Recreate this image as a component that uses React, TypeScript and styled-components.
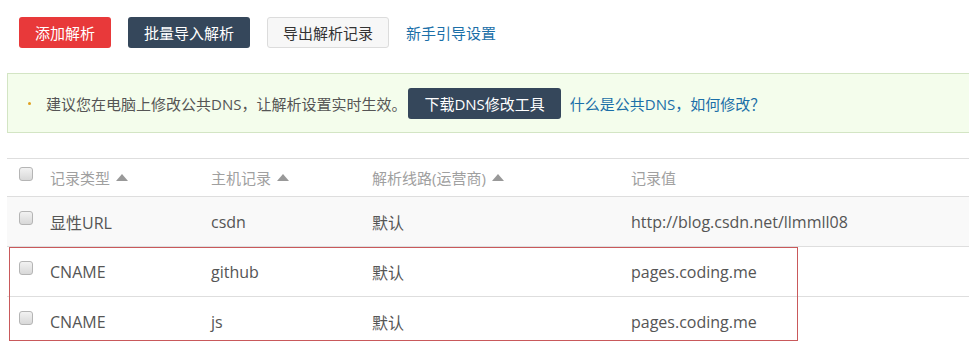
import React from 'react';
import styled, { createGlobalStyle } from 'styled-components';

const GlobalStyle = createGlobalStyle`
  body {
    margin: 0;
    background: #fff;
    font-family: 'Open Sans', 'Noto Sans CJK SC', sans-serif;
    font-size: 15px;
    color: #555;
    overflow: hidden;
  }
`;

const Page = styled.div`
  width: 969px;
  height: 348px;
  overflow: hidden;
`;

const Toolbar = styled.div`
  display: flex;
  align-items: center;
  gap: 17px;
  padding: 16px 0 0 19px;
  height: 32px;
`;

const Button = styled.button<{ $kind: 'danger' | 'dark' | 'plain' }>`
  height: 31px;
  padding: 0 15px;
  border-radius: 3px;
  font-family: inherit;
  font-size: 15px;
  cursor: pointer;
  border: 1px solid transparent;
  ${({ $kind }) =>
    $kind === 'danger'
      ? 'background: #e8393a; color: #fff;'
      : $kind === 'dark'
        ? 'background: #35475b; color: #fff;'
        : 'background: #f7f7f7; color: #333; border-color: #dcdcdc;'}
`;

const Link = styled.a`
  color: #1b6fa8;
  text-decoration: none;
  font-size: 15px;
`;

const Notice = styled.div`
  display: flex;
  align-items: center;
  margin: 25px -10px 0 7px;
  height: 58px;
  padding-left: 20px;
  background: #f4fdec;
  border: 1px solid #d3e5c4;
  color: #555;
`;

const Bullet = styled.span`
  width: 3px;
  height: 3px;
  border-radius: 50%;
  background: #e0a020;
  margin-right: 15px;
`;

const NoticeButton = styled(Button)`
  margin: 0 9px 0 2px;
`;

const Table = styled.div`
  position: relative;
  margin: 25px 0 0 7px;
`;

const Row = styled.div<{ $head?: boolean; $shade?: boolean }>`
  display: grid;
  grid-template-columns: 43px 161px 161px 259px 1fr;
  align-items: center;
  height: ${({ $head }) => ($head ? 37 : 49)}px;
  border-top: 1px solid #dedede;
  background: ${({ $shade }) => ($shade ? '#f9f9f9' : '#fff')};
  color: ${({ $head }) => ($head ? '#a0a0a0' : '#555')};
  font-size: ${({ $head }) => ($head ? 15 : 16)}px;
  &:last-child {
    border-bottom: 1px solid #dedede;
  }
`;

const Check = styled.span`
  justify-self: start;
  margin-left: 12px;
  margin-top: -8px;
  width: 12px;
  height: 12px;
  border: 1px solid #b5b5b5;
  border-radius: 3px;
  background: linear-gradient(#f2f2f2, #d8d8d8);
`;

const Cell = styled.span`
  display: flex;
  align-items: center;
  gap: 4px;
  white-space: nowrap;
`;

const Caret = styled.span`
  width: 0;
  height: 0;
  border-left: 6px solid transparent;
  border-right: 6px solid transparent;
  border-bottom: 7px solid #999;
  margin-left: 2px;
`;

const Highlight = styled.div`
  position: absolute;
  left: 2px;
  top: 89px;
  width: 787px;
  height: 92px;
  border: 1px solid #c9595b;
  pointer-events: none;
`;

const records = [
  { type: '显性URL', host: 'csdn', line: '默认', value: 'http://blog.csdn.net/llmmll08' },
  { type: 'CNAME', host: 'github', line: '默认', value: 'pages.coding.me' },
  { type: 'CNAME', host: 'js', line: '默认', value: 'pages.coding.me' },
];

export default function App() {
  return (
    <Page>
      <GlobalStyle />
      <Toolbar>
        <Button $kind="danger">添加解析</Button>
        <Button $kind="dark">批量导入解析</Button>
        <Button $kind="plain">导出解析记录</Button>
        <Link href="#">新手引导设置</Link>
      </Toolbar>
      <Notice>
        <Bullet />
        建议您在电脑上修改公共DNS，让解析设置实时生效。
        <NoticeButton $kind="dark">下载DNS修改工具</NoticeButton>
        <Link href="#">什么是公共DNS，如何修改？</Link>
      </Notice>
      <Table>
        <Row $head>
          <Check />
          <Cell>
            记录类型 <Caret />
          </Cell>
          <Cell>
            主机记录 <Caret />
          </Cell>
          <Cell>
            解析线路(运营商) <Caret />
          </Cell>
          <Cell>记录值</Cell>
        </Row>
        {records.map((r, i) => (
          <Row key={i} $shade={i === 0}>
            <Check />
            <Cell>{r.type}</Cell>
            <Cell>{r.host}</Cell>
            <Cell>{r.line}</Cell>
            <Cell>{r.value}</Cell>
          </Row>
        ))}
        <Highlight />
      </Table>
    </Page>
  );
}
